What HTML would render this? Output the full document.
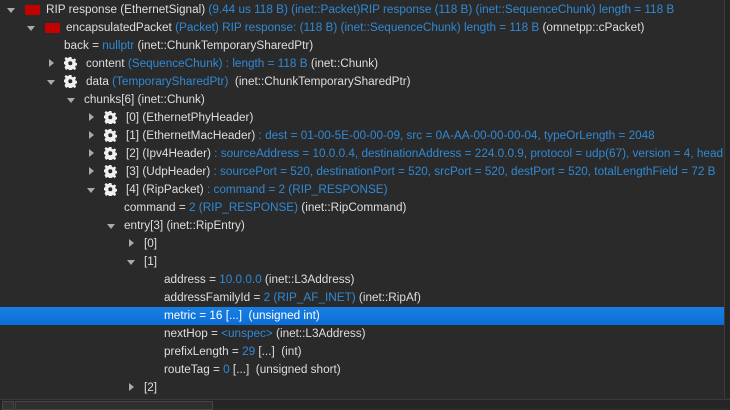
<!DOCTYPE html>
<html><head><meta charset="utf-8"><style>
body{margin:0;width:730px;height:407px;background:#2a2a2a;overflow:hidden;font-family:"Liberation Sans","DejaVu Sans",sans-serif;font-size:11.75px;color:#dedede;position:relative}
#v{position:absolute;left:0;top:0;width:723px;height:398px;overflow:hidden}
.r{position:absolute;height:18px;line-height:18px;white-space:nowrap}
.b{color:#3189d4}
.ad{position:absolute;width:0;height:0;border-left:4px solid transparent;border-right:4px solid transparent;border-top:5px solid #aaa}
.ar{position:absolute;width:0;height:0;border-top:4px solid transparent;border-bottom:4px solid transparent;border-left:5px solid #aaa}
.red{position:absolute;width:15px;height:10px;background:#c40000;border-radius:1px}
.g{position:absolute;width:13px;height:13px}
#sel{position:absolute;left:0;top:307px;width:724px;height:18px;background:linear-gradient(#1a80e2,#0b6dd8)}
#vs{position:absolute;left:724px;top:0;width:6px;height:398px;background:#252525;border-left:1px solid #3a3a3a}
#hs{position:absolute;left:0;top:399px;width:730px;height:8px;background:#252525;border-top:1px solid #3a3a3a}
</style></head><body>
<div id="sel"></div>
<div id="v">
<svg width="0" height="0" style="position:absolute"><defs><g id="gear"><path fill="#f0f0f0" d="M5.3 0h2.4l.4 2 1.5.7 1.7-1.2 1.7 1.7-1.2 1.7.7 1.5 2 .4v2.4l-2 .4-.7 1.5 1.2 1.7-1.7 1.7-1.7-1.2-1.5.7-.4 2H5.3l-.4-2-1.5-.7-1.7 1.2L0 11.4l1.2-1.7-.7-1.5L-1.5 7.8V5.3l2-.4.7-1.5L0 1.7 1.7 0l1.7 1.2 1.5-.7z" transform="translate(0.5 0) scale(0.9)"/><circle cx="6.3" cy="6.3" r="2" fill="#2a2a2a"/></g></defs></svg>

<div class="ad" style="left:7px;top:8px"></div><div class="red" style="left:25px;top:5px"></div>
<div class="r" style="left:46px;top:1px">RIP response (EthernetSignal) <span class="b">(9.44 us 118 B) (inet::Packet)RIP response (118 B) (inet::SequenceChunk) length = 118 B</span></div>

<div class="ad" style="left:27px;top:26px"></div><div class="red" style="left:45px;top:23px"></div>
<div class="r" style="left:66px;top:19px">encapsulatedPacket <span class="b">(Packet) RIP response: (118 B) (inet::SequenceChunk) length = 118 B</span> (omnetpp::cPacket)</div>

<div class="r" style="left:64px;top:37px">back = <span class="b">nullptr</span> (inet::ChunkTemporarySharedPtr)</div>

<div class="ar" style="left:49px;top:59px"></div><svg class="g" style="left:64px;top:57px" viewBox="0 0 13 13"><use href="#gear"/></svg>
<div class="r" style="left:86px;top:55px">content <span class="b">(SequenceChunk) : length = 118 B</span> (inet::Chunk)</div>

<div class="ad" style="left:47px;top:80px"></div><svg class="g" style="left:64px;top:75px" viewBox="0 0 13 13"><use href="#gear"/></svg>
<div class="r" style="left:86px;top:73px">data <span class="b">(TemporarySharedPtr)</span>&nbsp; (inet::ChunkTemporarySharedPtr)</div>

<div class="ad" style="left:67px;top:98px"></div>
<div class="r" style="left:84px;top:91px">chunks[6] (inet::Chunk)</div>

<div class="ar" style="left:89px;top:113px"></div><svg class="g" style="left:104px;top:111px" viewBox="0 0 13 13"><use href="#gear"/></svg>
<div class="r" style="left:126px;top:109px">[0] (EthernetPhyHeader)</div>

<div class="ar" style="left:89px;top:131px"></div><svg class="g" style="left:104px;top:129px" viewBox="0 0 13 13"><use href="#gear"/></svg>
<div class="r" style="left:126px;top:127px">[1] (EthernetMacHeader) <span class="b">: dest = 01-00-5E-00-00-09, src = 0A-AA-00-00-00-04, typeOrLength = 2048</span></div>

<div class="ar" style="left:89px;top:149px"></div><svg class="g" style="left:104px;top:147px" viewBox="0 0 13 13"><use href="#gear"/></svg>
<div class="r" style="left:126px;top:145px">[2] (Ipv4Header) <span class="b">: sourceAddress = 10.0.0.4, destinationAddress = 224.0.0.9, protocol = udp(67), version = 4, headerLength = 20 B</span></div>

<div class="ar" style="left:89px;top:167px"></div><svg class="g" style="left:104px;top:165px" viewBox="0 0 13 13"><use href="#gear"/></svg>
<div class="r" style="left:126px;top:163px">[3] (UdpHeader) <span class="b">: sourcePort = 520, destinationPort = 520, srcPort = 520, destPort = 520, totalLengthField = 72 B</span></div>

<div class="ad" style="left:87px;top:188px"></div><svg class="g" style="left:104px;top:183px" viewBox="0 0 13 13"><use href="#gear"/></svg>
<div class="r" style="left:126px;top:181px">[4] (RipPacket) <span class="b">: command = 2 (RIP_RESPONSE)</span></div>

<div class="r" style="left:124px;top:199px">command = <span class="b">2 (RIP_RESPONSE)</span> (inet::RipCommand)</div>

<div class="ad" style="left:107px;top:224px"></div>
<div class="r" style="left:124px;top:217px">entry[3] (inet::RipEntry)</div>

<div class="ar" style="left:129px;top:239px"></div>
<div class="r" style="left:144px;top:235px">[0]</div>

<div class="ad" style="left:127px;top:260px"></div>
<div class="r" style="left:144px;top:253px">[1]</div>

<div class="r" style="left:164px;top:271px">address = <span class="b">10.0.0.0</span> (inet::L3Address)</div>
<div class="r" style="left:164px;top:289px">addressFamilyId = <span class="b">2 (RIP_AF_INET)</span> (inet::RipAf)</div>
<div class="r" style="left:164px;top:307px;color:#fff">metric = 16 [...]&nbsp; (unsigned int)</div>
<div class="r" style="left:164px;top:325px">nextHop = <span class="b">&lt;unspec&gt;</span> (inet::L3Address)</div>
<div class="r" style="left:164px;top:343px">prefixLength = <span class="b">29</span> [...]&nbsp; (int)</div>
<div class="r" style="left:164px;top:361px">routeTag = <span class="b">0</span> [...]&nbsp; (unsigned short)</div>

<div class="ar" style="left:129px;top:383px"></div>
<div class="r" style="left:144px;top:379px">[2]</div>
</div>
<div id="vs"></div>
<div id="hs"><div style="position:absolute;left:2px;top:1px;width:10px;height:7px;background:#333;border:1px solid #444"></div><div style="position:absolute;left:15px;top:1px;width:196px;height:7px;background:#2e2e2e;border:1px solid #444"></div></div>
</body></html>
